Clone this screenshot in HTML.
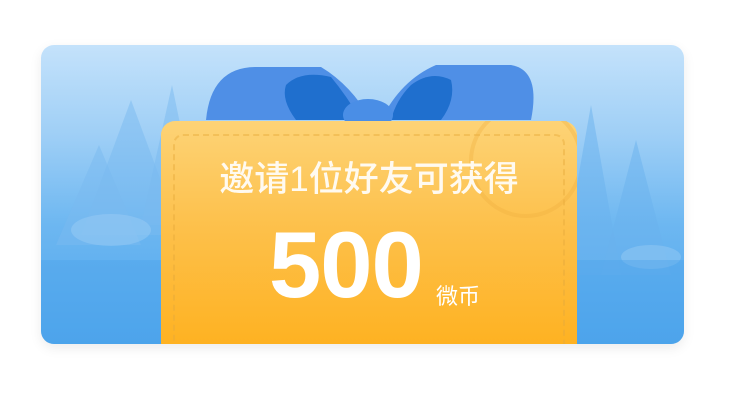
<!DOCTYPE html>
<html><head><meta charset="utf-8"><style>
html,body{margin:0;padding:0;background:#fff;width:750px;height:406px;overflow:hidden}
.card{position:absolute;left:41px;top:45px;width:643px;height:299px;border-radius:13px;overflow:hidden;
background:linear-gradient(180deg,#c4e2fb 0%,#9fcff6 30%,#6db7f1 60%,#4ea5ec 100%);box-shadow:0 4px 12px rgba(0,0,0,0.08)}
.gift{position:absolute;left:120px;top:76px;width:416px;height:240px;border-radius:14px 14px 0 0;
background:linear-gradient(180deg,#fdd376 0%,#fdc04a 45%,#feb01c 100%)}
.dash{position:absolute;left:12px;top:13px;right:12px;bottom:-20px;border:2px dashed rgba(230,170,60,0.45);border-radius:10px}
.t1{position:absolute;left:0;width:416px;top:30px;text-align:center;color:#fffaf0;font:500 35px "Liberation Sans","Noto Sans CJK SC",sans-serif}
.num{position:absolute;left:108px;top:90px;color:#fff;font:bold 94px "Liberation Sans",sans-serif;letter-spacing:-1px}
.unit{position:absolute;left:275px;top:158px;color:#fff;font:22px "Liberation Sans","Noto Sans CJK SC",sans-serif}
</style></head><body>
<div class="card">
<svg width="643" height="299" style="position:absolute;left:0;top:0">
<polygon points="40,190 90,55 140,190" fill="#7ab9ef" opacity="0.5"/>
<polygon points="15,200 58,100 100,200" fill="#7ab9ef" opacity="0.5"/>
<polygon points="100,180 131,40 160,180" fill="#79b9f0" opacity="0.5"/>
<polygon points="520,230 550,60 580,230" fill="#6ab2ee" opacity="0.5"/>
<polygon points="560,230 595,95 630,230" fill="#6ab2ee" opacity="0.5"/>
<ellipse cx="70" cy="185" rx="40" ry="16" fill="#a8d3f6" opacity="0.35"/>
<ellipse cx="610" cy="212" rx="30" ry="12" fill="#a8d3f6" opacity="0.35"/>
<rect x="0" y="215" width="643" height="84" fill="#4aa2ea" opacity="0.4"/>
<path d="M165,75 Q170,22 215,22 L280,22 Q310,40 330,75Z" fill="#4f8fe6"/>
<path d="M245,40 Q260,25 290,32 Q305,50 320,75 L255,75 Q240,55 245,40Z" fill="#1f6fce"/>
<path d="M490,75 Q500,25 470,20 L395,20 Q360,35 340,75Z" fill="#4f8fe6"/>
<path d="M410,35 Q390,25 370,40 Q355,55 350,75 L400,75 Q415,55 410,35Z" fill="#1f6fce"/>
<ellipse cx="327" cy="70" rx="25" ry="16" fill="#4a8ee6"/>
</svg>
<div class="gift">
<div class="dash"></div>
<svg width="416" height="240" style="position:absolute;left:0;top:0"><circle cx="365" cy="40" r="55" fill="none" stroke="#eeb040" stroke-width="4" opacity="0.35"/></svg>
<div class="t1">邀请1位好友可获得</div>
<div class="num">500</div>
<div class="unit">微币</div>
</div>
</div>
</body></html>
